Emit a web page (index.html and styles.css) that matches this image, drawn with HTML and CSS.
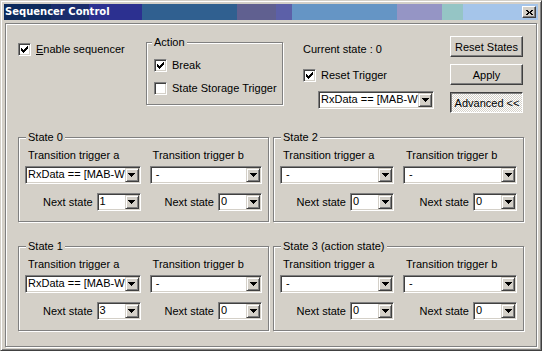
FILE: index.html
```html
<!DOCTYPE html>
<html lang="en">
<head>
    <meta charset="UTF-8">
    <title>Sequencer Control</title>
    <link rel="stylesheet" href="styles.css">
</head>
<body>
    <div class="window">
        <div class="titlebar">
            <span class="title">Sequencer Control</span>
            <span class="close">
                <svg width="7" height="5" viewBox="0 0 7 5" shape-rendering="crispEdges">
                    <rect x="0" y="0" width="2" height="1"/><rect x="5" y="0" width="2" height="1"/>
                    <rect x="1" y="1" width="2" height="1"/><rect x="4" y="1" width="2" height="1"/>
                    <rect x="2" y="2" width="3" height="1"/>
                    <rect x="1" y="3" width="2" height="1"/><rect x="4" y="3" width="2" height="1"/>
                    <rect x="0" y="4" width="2" height="1"/><rect x="5" y="4" width="2" height="1"/>
                </svg>
            </span>
        </div>

        <div class="panel">
            <div class="top">
                <div class="enable">
                    <div class="checkrow">
                        <span class="check on"><svg viewBox="0 0 7 7" shape-rendering="crispEdges"><path d="M0 2h1v1h1v1h1v-1h1v-1h1v-1h1v-1h1v3h-1v1h-1v1h-1v1h-1v1h-1v-1h-1v-1h-1z"/></svg></span>
                        <span><u>E</u>nable sequencer</span>
                    </div>
                </div>

                <fieldset class="group action">
                    <legend>Action</legend>
                    <div class="checkrow">
                        <span class="check on"><svg viewBox="0 0 7 7" shape-rendering="crispEdges"><path d="M0 2h1v1h1v1h1v-1h1v-1h1v-1h1v-1h1v3h-1v1h-1v1h-1v1h-1v1h-1v-1h-1v-1h-1z"/></svg></span>
                        <span>Break</span>
                    </div>
                    <div class="checkrow">
                        <span class="check"></span>
                        <span>State Storage Trigger</span>
                    </div>
                </fieldset>

                <div class="current">
                    <div class="current-state">Current state : 0</div>
                    <div class="checkrow reset">
                        <span class="check on"><svg viewBox="0 0 7 7" shape-rendering="crispEdges"><path d="M0 2h1v1h1v1h1v-1h1v-1h1v-1h1v-1h1v3h-1v1h-1v1h-1v1h-1v1h-1v-1h-1v-1h-1z"/></svg></span>
                        <span>Reset Trigger</span>
                    </div>
                    <div class="combo reset-combo">
                        <span class="value">RxData == [MAB-W</span>
                        <span class="drop"><svg viewBox="0 0 7 4" shape-rendering="crispEdges"><path d="M0 0h7v1h-1v1h-1v1h-1v1h-1v-1h-1v-1h-1v-1h-1z"/></svg></span>
                    </div>
                </div>

                <div class="buttons">
                    <button class="btn">Reset States</button>
                    <button class="btn">Apply</button>
                    <button class="btn pressed">Advanced &lt;&lt;</button>
                </div>
            </div>

            <div class="states" id="states"></div>
        </div>
    </div>

    <script>
        const states = [
            { title: 'State 0', a: 'RxData == [MAB-W', b: '\u00a0-', nextA: '1', nextB: '0' },
            { title: 'State 2', a: '\u00a0-', b: '\u00a0-', nextA: '0', nextB: '0' },
            { title: 'State 1', a: 'RxData == [MAB-W', b: '\u00a0-', nextA: '3', nextB: '0' },
            { title: 'State 3 (action state)', a: '\u00a0-', b: '\u00a0-', nextA: '0', nextB: '0' }
        ];

        const arrow = '<svg viewBox="0 0 7 4" shape-rendering="crispEdges"><path d="M0 0h7v1h-1v1h-1v1h-1v1h-1v-1h-1v-1h-1v-1h-1z"/></svg>';

        function combo(value, extra) {
            return `<div class="combo ${extra || ''}"><span class="value">${value}</span><span class="drop">${arrow}</span></div>`;
        }

        function trigger(label, value, next) {
            return `
                <div class="trigger">
                    <div class="trigger-label">${label}</div>
                    ${combo(value)}
                    <div class="next-row">
                        <span>Next state</span>
                        ${combo(next, 'small')}
                    </div>
                </div>`;
        }

        const container = document.getElementById('states');
        states.forEach(state => {
            const group = document.createElement('fieldset');
            group.className = 'group state';
            group.innerHTML = `
                <legend>${state.title}</legend>
                <div class="state-body">
                    ${trigger('Transition trigger a', state.a, state.nextA)}
                    ${trigger('Transition trigger b', state.b, state.nextB)}
                </div>`;
            container.appendChild(group);
        });
    </script>
</body>
</html>
```

FILE: styles.css
```css
html, body {
    margin: 0;
    padding: 0;
    background: #d4d0c8;
}
body {
    font-family: "Liberation Sans", Arial, sans-serif;
    font-size: 11px;
    color: #000;
}
.window {
    width: 542px;
    height: 351px;
    box-sizing: border-box;
    display: flex;
    flex-direction: column;
    padding: 3px;
    border: 1px solid;
    border-color: #d4d0c8 #404040 #404040 #d4d0c8;
    box-shadow: inset 1px 1px 0 #fff, inset -1px -1px 0 #808080;
    background: #d4d0c8;
}

/* title bar */
.titlebar {
    height: 16px;
    flex: none;
    display: flex;
    align-items: center;
    padding: 0 2px 0 1px;
    background: linear-gradient(to right,
        #0c2a5c 0 47px, #1a2c6c 47px 85px, #2c3090 85px 138px,
        #306090 138px 233px, #606090 233px 272px, #5c60a8 272px 288px,
        #6595c5 288px 393px, #9595c5 393px 438px, #95c5c5 438px 459px,
        #a5c5ea 459px);
}
.title {
    font-family: "DejaVu Sans", Verdana, sans-serif;
    font-weight: bold;
    font-size: 10px;
    color: #fff;
    line-height: 16px;
}
.close {
    margin-left: auto;
    width: 14px;
    height: 12px;
    box-sizing: border-box;
    display: flex;
    align-items: center;
    justify-content: center;
    background: #d4d0c8;
    border: 1px solid;
    border-color: #fff #404040 #404040 #fff;
    box-shadow: inset -1px -1px 0 #808080;
}
.close svg {
    display: block;
    fill: #000;
}

/* main panel */
.panel {
    flex: 1;
    margin: 3px 1px 0;
    padding: 0 13px 0 12px;
    border: 1px solid #808080;
    box-shadow: inset 1px 1px 0 #fff, 1px 1px 0 #fff;
}
.top {
    height: 107px;
    display: flex;
    align-items: flex-start;
}
.enable {
    width: 128px;
    flex: none;
    padding-top: 19px;
}
.checkrow {
    display: flex;
    align-items: center;
    gap: 5px;
    height: 13px;
    line-height: 13px;
    white-space: nowrap;
}
.check {
    width: 13px;
    height: 13px;
    flex: none;
    box-sizing: border-box;
    display: flex;
    align-items: center;
    justify-content: center;
    background: #fff;
    border: 1px solid;
    border-color: #808080 #fff #fff #808080;
    box-shadow: inset 1px 1px 0 #404040, inset -1px -1px 0 #d4d0c8;
}
.check svg {
    display: block;
    width: 7px;
    height: 7px;
    fill: #000;
}

/* group boxes */
.group {
    margin: 0;
    min-width: 0;
    border: 1px solid #808080;
    box-shadow: inset 1px 1px 0 #fff, 1px 1px 0 #fff;
}
.group legend {
    padding: 0 2px;
    margin-left: 1px;
    line-height: 13px;
    background: #d4d0c8;
}
.action {
    width: 137px;
    box-sizing: border-box;
    flex: none;
    margin-top: 12px;
    padding: 0 7px 9px;
}
.action legend {
    margin-left: -2px;
}
.action .checkrow {
    margin-top: 10px;
}

.current {
    flex: 1;
    margin-left: 20px;
    padding-top: 19px;
}
.current-state {
    line-height: 13px;
}
.reset {
    margin-top: 13px;
}
.reset-combo {
    width: 116px;
    margin: 9px 0 0 15px;
}

.buttons {
    width: 73px;
    flex: none;
    padding-top: 12px;
    display: flex;
    flex-direction: column;
    gap: 7px;
}
.btn {
    width: 73px;
    height: 21px;
    padding: 0;
    font: inherit;
    color: #000;
    background: #d4d0c8;
    border: 1px solid;
    border-color: #fff #404040 #404040 #fff;
    box-shadow: inset -1px -1px 0 #808080;
}
.btn.pressed {
    padding: 1px 0 0 1px;
    border-color: #404040 #fff #fff #404040;
    box-shadow: inset 1px 1px 0 #808080;
    background: repeating-conic-gradient(#fff 0 25%, #d4d0c8 0 50%) 0 0 / 2px 2px;
}

/* combo boxes */
.combo {
    display: flex;
    height: 18px;
    box-sizing: border-box;
    padding: 1px;
    background: #fff;
    border: 1px solid;
    border-color: #808080 #fff #fff #808080;
    box-shadow: inset 1px 1px 0 #404040, inset -1px -1px 0 #d4d0c8;
}
.combo .value {
    flex: 1;
    min-width: 0;
    overflow: hidden;
    white-space: nowrap;
    padding-left: 1px;
    line-height: 12px;
}
.combo .drop {
    width: 14px;
    flex: none;
    box-sizing: border-box;
    display: flex;
    align-items: center;
    justify-content: center;
    background: #d4d0c8;
    border: 1px solid;
    border-color: #d4d0c8 #404040 #404040 #d4d0c8;
    box-shadow: inset 1px 1px 0 #fff, inset -1px -1px 0 #808080;
}
.combo .drop svg {
    display: block;
    width: 7px;
    height: 4px;
    fill: #000;
}
.combo.small {
    width: 44px;
}

/* state groups */
.states {
    display: grid;
    grid-template-columns: 251px 251px;
    column-gap: 4px;
    row-gap: 18px;
}
.state {
    padding: 5px 6px 10px;
}
.state-body {
    display: grid;
    grid-template-columns: 1fr 1fr;
    column-gap: 9px;
}
.trigger-label {
    line-height: 13px;
    padding-left: 3px;
    margin-bottom: 4px;
    white-space: nowrap;
}
.next-row {
    display: flex;
    justify-content: flex-end;
    align-items: center;
    gap: 4px;
    margin-top: 9px;
    white-space: nowrap;
}
```
